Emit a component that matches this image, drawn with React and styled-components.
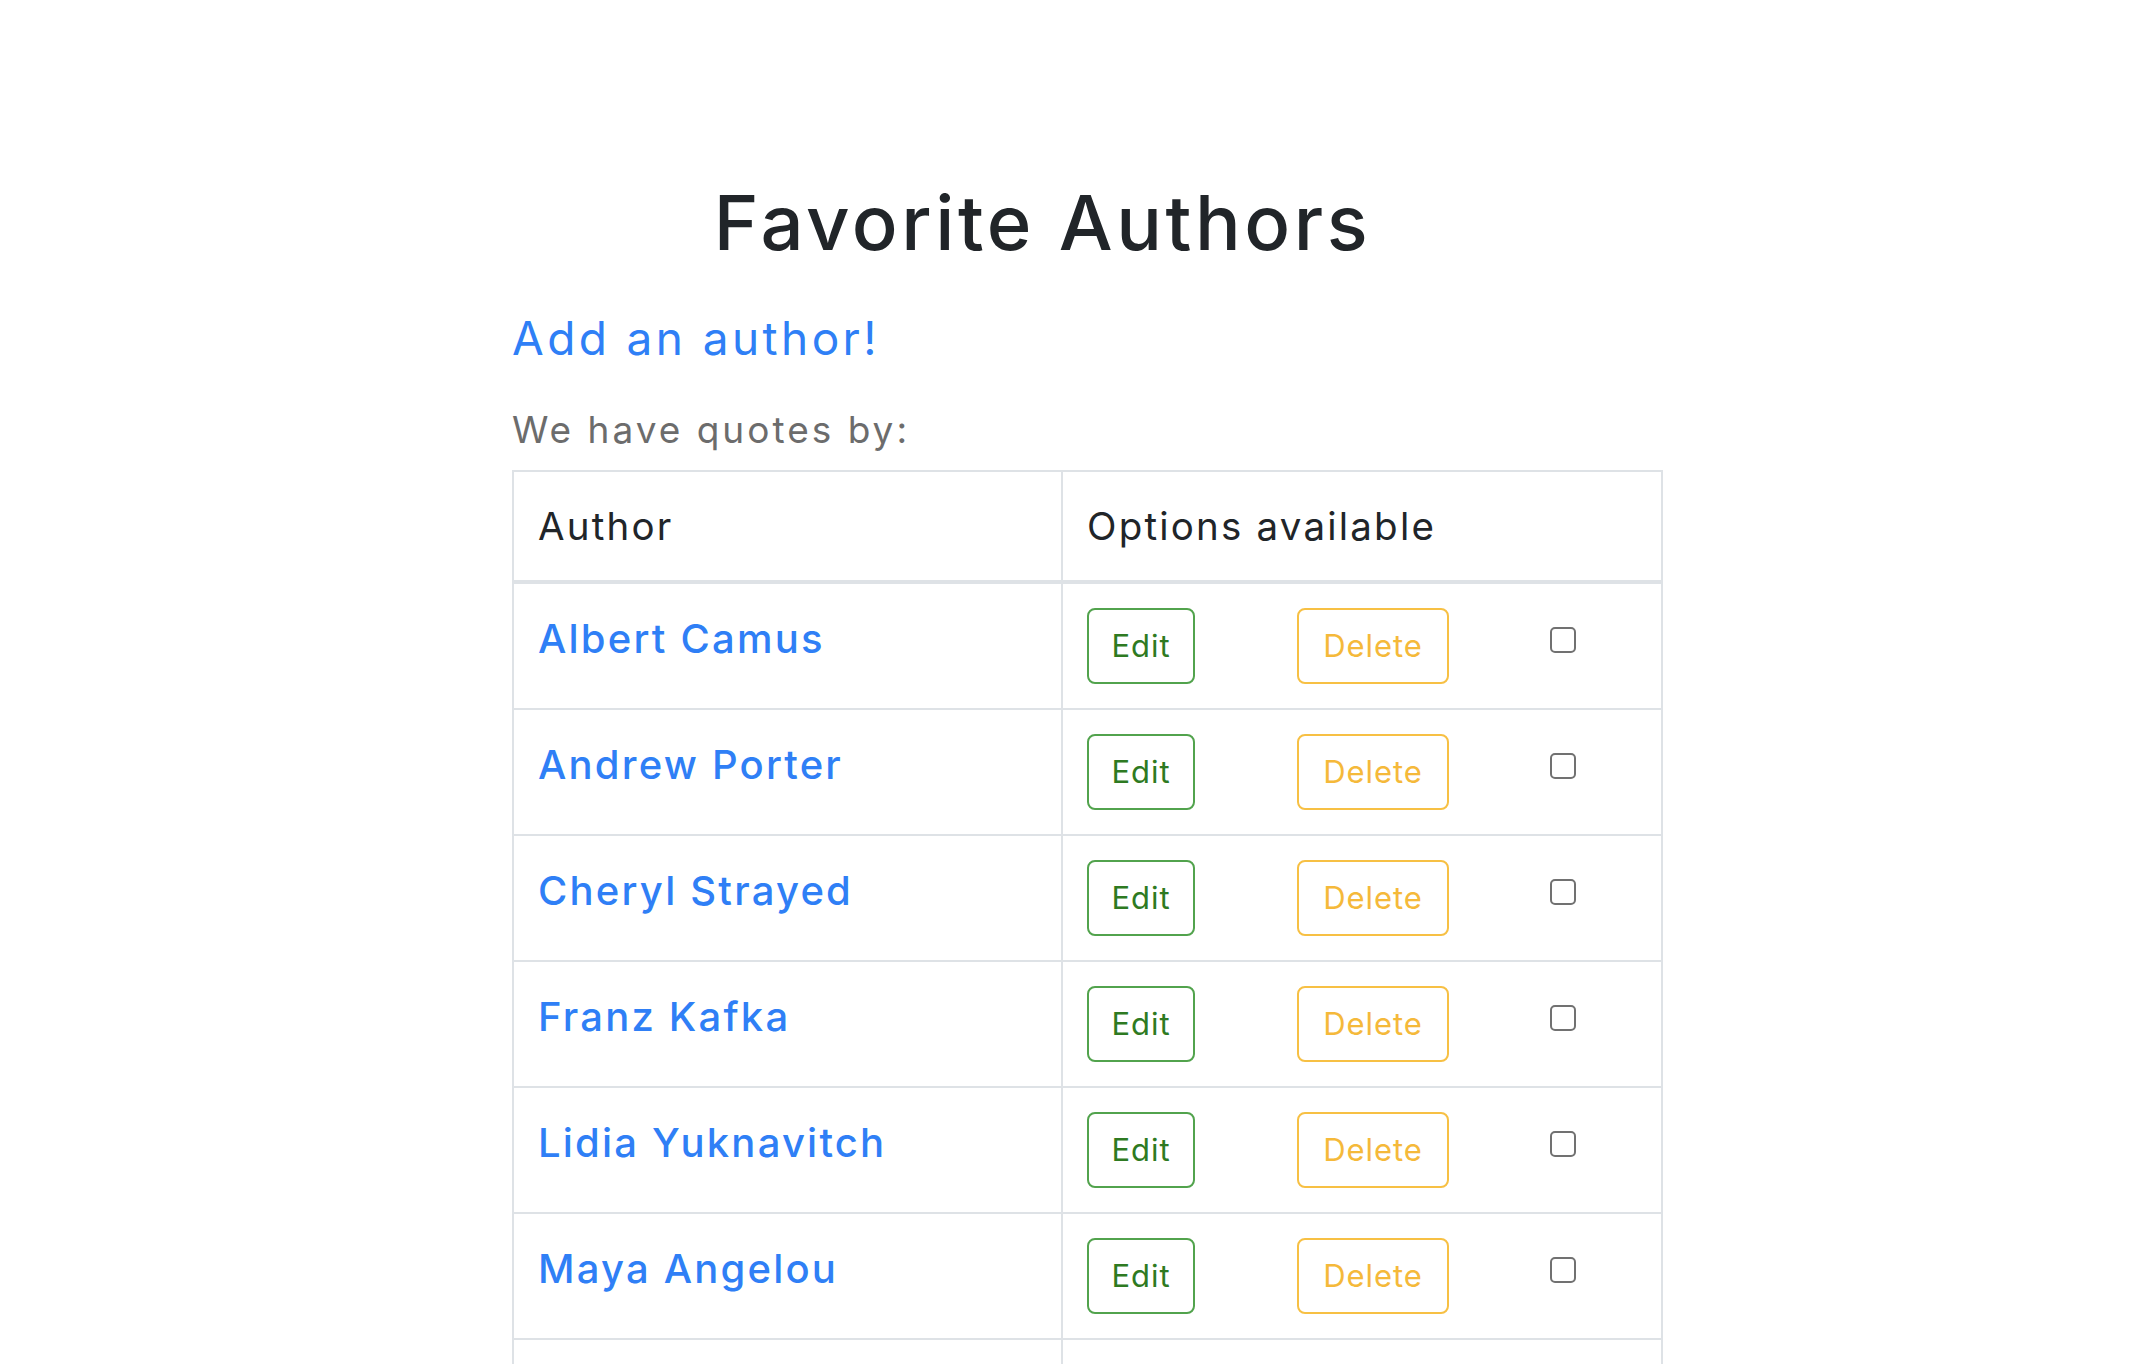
import React from 'react'
import styled, { createGlobalStyle } from 'styled-components'

const GlobalStyle = createGlobalStyle`
  body {
    margin: 0;
    background: #fff;
    font-family: Inter, "Noto Sans", sans-serif;
    color: #212529;
  }
`

const Page = styled.div`
  padding-top: 177px;
`

const Title = styled.h1`
  margin: 0;
  padding-right: 48px;
  text-align: center;
  font-size: 76px;
  font-weight: 500;
  line-height: 1.2;
  letter-spacing: 0.047em;
`

const Content = styled.div`
  margin-left: 512px;
  width: 1151px;
`

const AddLink = styled.a`
  display: block;
  margin-top: 43px;
  font-size: 46px;
  line-height: 54px;
  letter-spacing: 3.4px;
  color: #2f7ff6;
  text-decoration: none;
`

const Subtitle = styled.h5`
  margin: 43px 0 18px;
  font-size: 37px;
  line-height: 44px;
  font-weight: 400;
  letter-spacing: 3px;
  color: #6c6c6c;
`

const Table = styled.table`
  width: 1151px;
  table-layout: fixed;
  border-collapse: separate;
  border-spacing: 0;
  border-top: 2px solid #dee2e6;
  border-left: 2px solid #dee2e6;
`

const HeadCell = styled.th`
  box-sizing: border-box;
  width: ${p => p.$width || 'auto'};
  padding: 24px;
  text-align: left;
  vertical-align: top;
  font-size: 38.5px;
  font-weight: 400;
  line-height: 60px;
  letter-spacing: 2.2px;
  border-right: 2px solid #dee2e6;
  border-bottom: 4px solid #dee2e6;
`

const Cell = styled.td`
  height: ${p => (p.$filler ? '60px' : 'auto')};
  padding: 24px;
  vertical-align: top;
  border-right: 2px solid #dee2e6;
  border-bottom: 2px solid #dee2e6;
`

const NameLink = styled.a`
  display: inline-block;
  padding-top: 1px;
  font-size: 40px;
  line-height: 60px;
  font-weight: 500;
  letter-spacing: 0.055em;
  color: #2f7ff6;
  text-decoration: none;
`

const Options = styled.div`
  display: flex;
  align-items: flex-start;
`

const OutlineButton = styled.button`
  box-sizing: border-box;
  width: ${p => p.$width}px;
  height: 76px;
  margin-right: ${p => p.$gap}px;
  padding: 0;
  border: 2px solid ${p => p.$border};
  border-radius: 8px;
  background: transparent;
  color: ${p => p.$color};
  font-family: inherit;
  font-size: 31px;
  line-height: 72px;
  letter-spacing: 0.03em;
  text-align: center;
  cursor: pointer;
`

const Check = styled.input`
  appearance: none;
  box-sizing: border-box;
  width: 26px;
  height: 26px;
  margin: 19px 0 0;
  border: 2px solid #717171;
  border-radius: 5px;
  background: #fff;
`

const authors = [
  'Albert Camus',
  'Andrew Porter',
  'Cheryl Strayed',
  'Franz Kafka',
  'Lidia Yuknavitch',
  'Maya Angelou',
]

export default function App() {
  return (
    <Page>
      <GlobalStyle />
      <Title>Favorite Authors</Title>
      <Content>
        <AddLink href="#">Add an author!</AddLink>
        <Subtitle>We have quotes by:</Subtitle>
        <Table>
          <thead>
            <tr>
              <HeadCell $width="549px">Author</HeadCell>
              <HeadCell>Options available</HeadCell>
            </tr>
          </thead>
          <tbody>
            {authors.map(name => (
              <tr key={name}>
                <Cell>
                  <NameLink href="#">{name}</NameLink>
                </Cell>
                <Cell>
                  <Options>
                    <OutlineButton $width={108} $gap={102} $border="#52a34d" $color="#2e7a22">
                      Edit
                    </OutlineButton>
                    <OutlineButton $width={152} $gap={101} $border="#f7c044" $color="#f5b93a">
                      Delete
                    </OutlineButton>
                    <Check type="checkbox" />
                  </Options>
                </Cell>
              </tr>
            ))}
            <tr>
              <Cell $filler />
              <Cell $filler />
            </tr>
          </tbody>
        </Table>
      </Content>
    </Page>
  )
}
